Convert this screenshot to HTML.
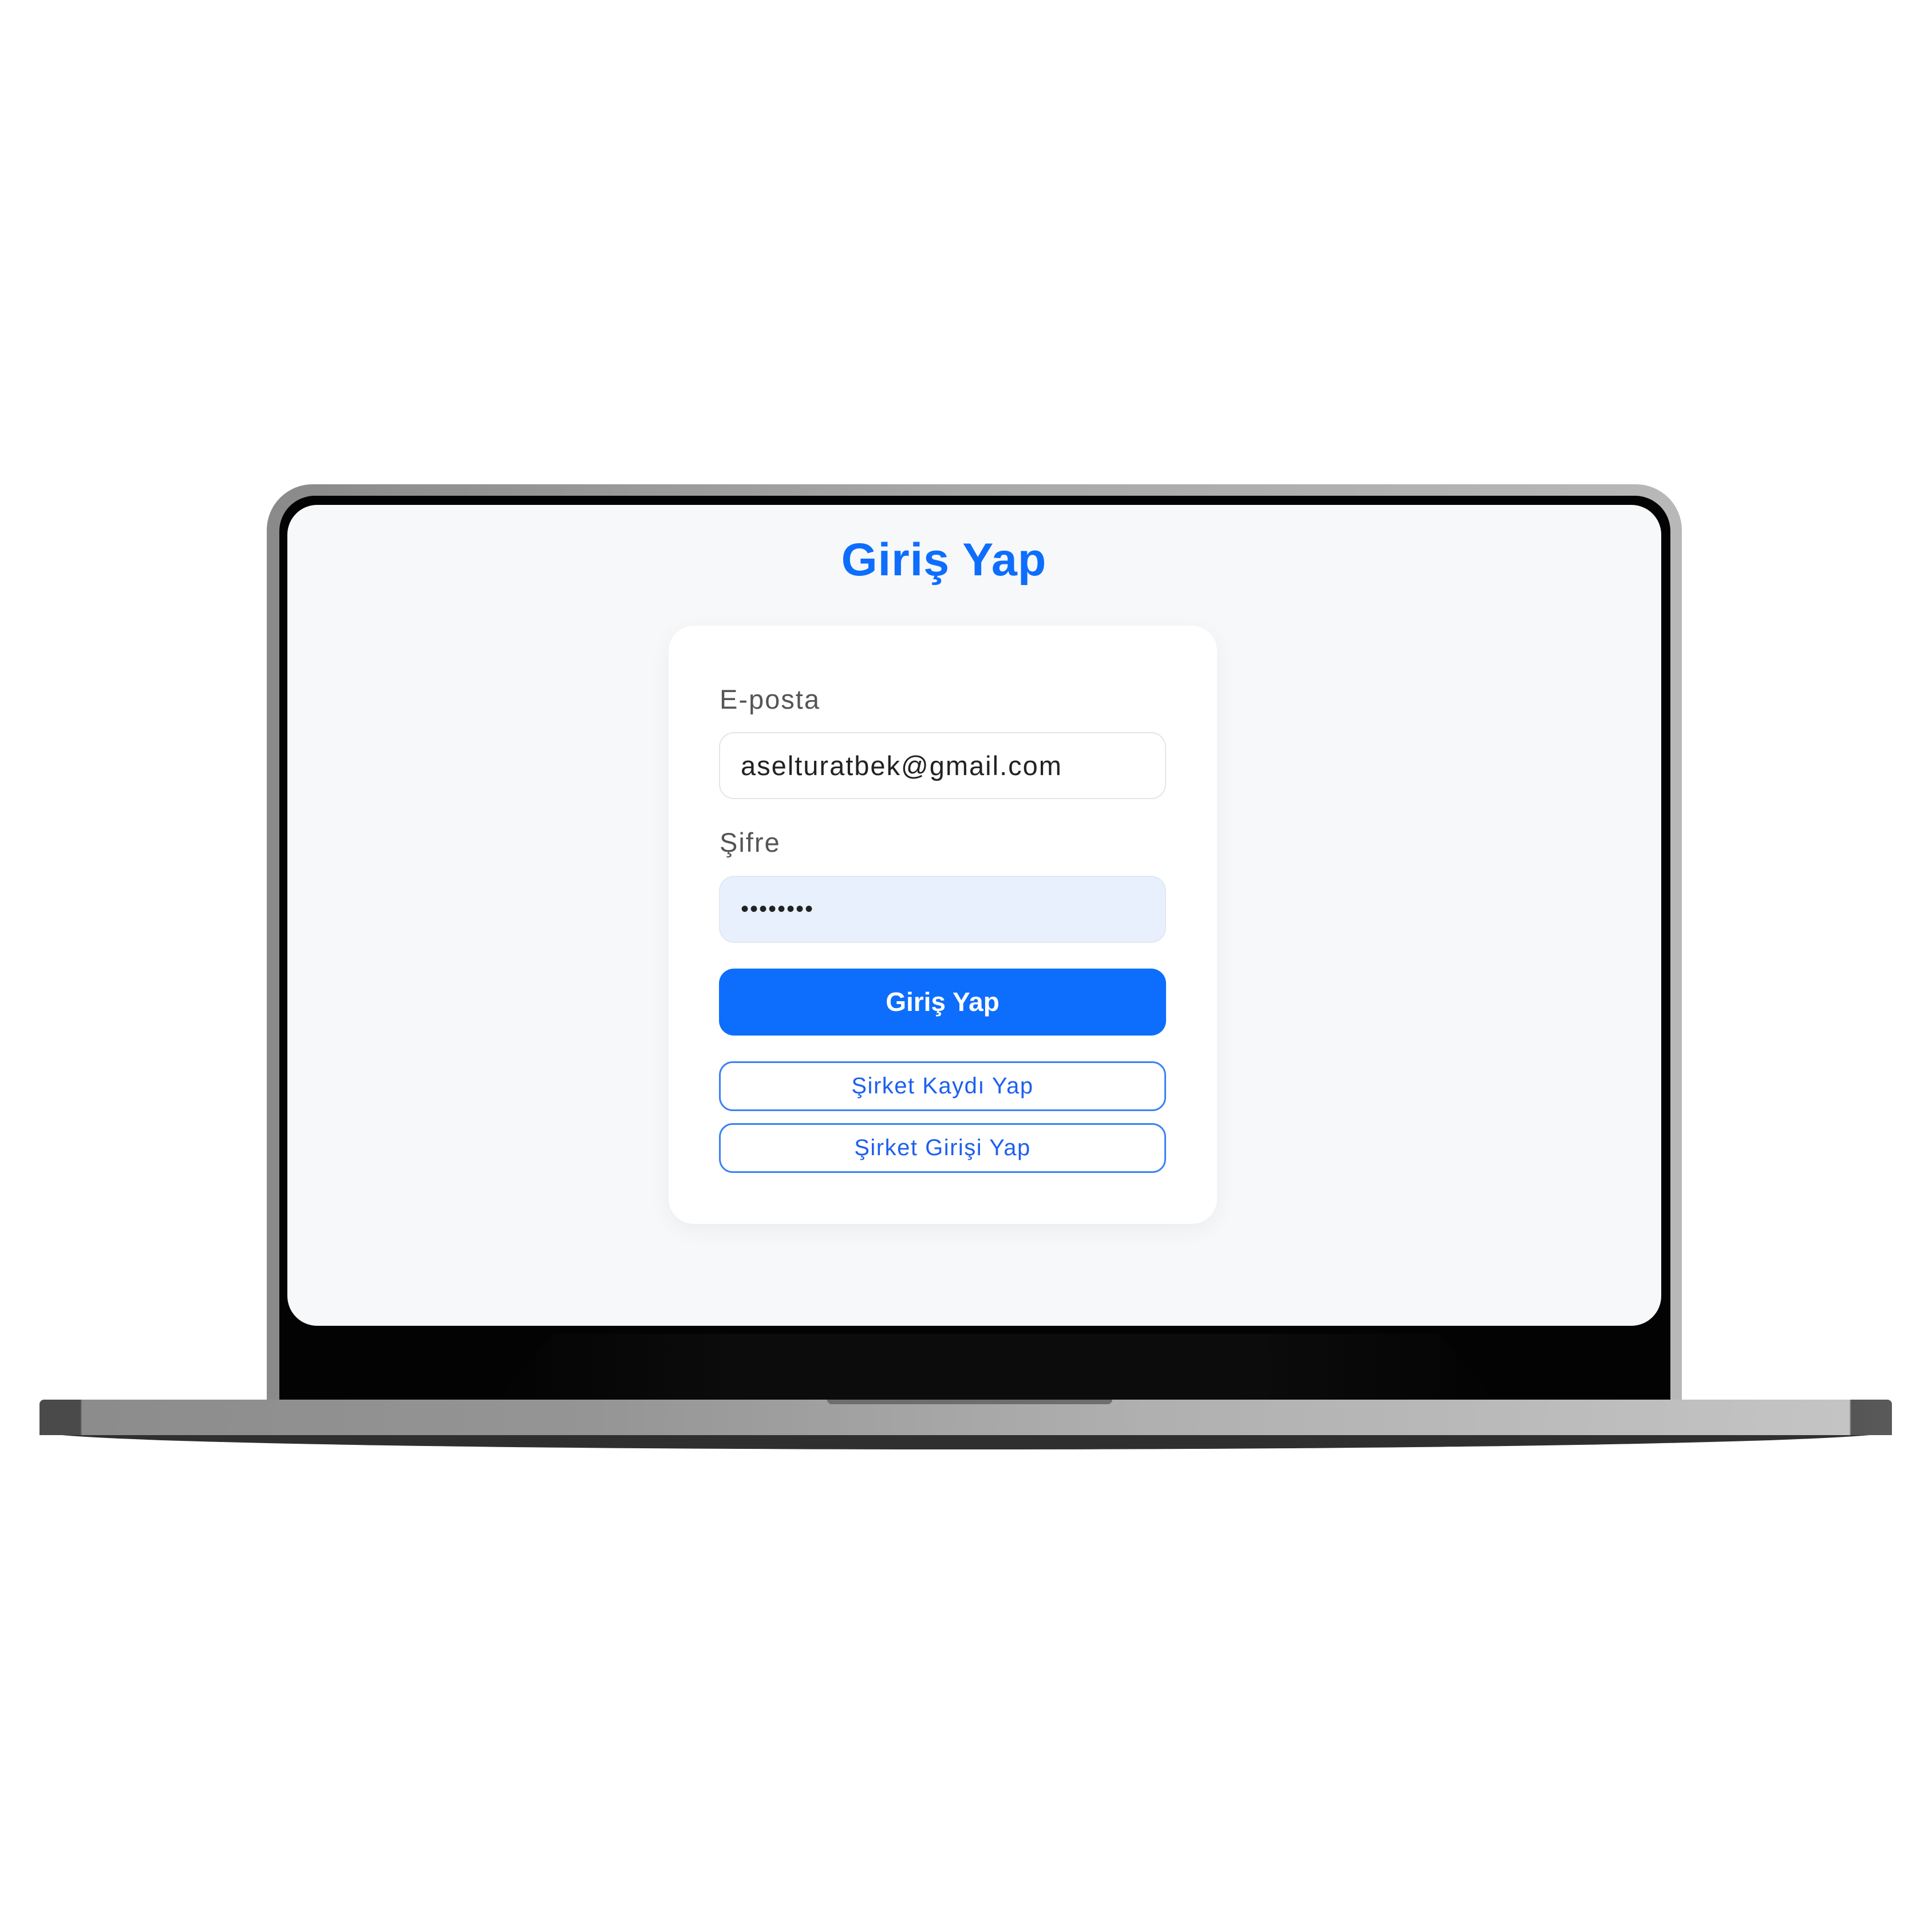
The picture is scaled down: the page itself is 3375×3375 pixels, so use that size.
<!DOCTYPE html>
<html><head><meta charset="utf-8"><style>
*{margin:0;padding:0;box-sizing:border-box}
html,body{width:3375px;height:3375px;background:#fff;overflow:hidden;font-family:"Liberation Sans",sans-serif}
.abs{position:absolute}
.bezel{left:466px;top:846px;width:2472px;height:1610px;border-radius:80px 80px 0 0;background:linear-gradient(90deg,#8a8a8a,#a8a8a8 50%,#b8b8b8)}
.black{left:488px;top:866px;width:2430px;height:1590px;border-radius:62px 62px 0 0;background:#030303}
.screen{left:502px;top:882px;width:2400px;height:1434px;border-radius:52px;background:#f7f8fa}
.kb{left:860px;top:2330px;width:1760px;height:126px;background:linear-gradient(90deg,rgba(20,20,20,0),rgba(16,16,16,.7) 25%,rgba(16,16,16,.7) 75%,rgba(20,20,20,0));clip-path:polygon(6% 0,94% 0,100% 100%,0 100%)}
.base{left:69px;top:2445px;width:3236px;height:62px;border-radius:8px 8px 0 0;background:linear-gradient(90deg,#4a4a4a 0,#4a4a4a 2.2%,#8c8c8c 2.3%,#959595 30%,#b0b0b0 60%,#c4c4c4 97.7%,#555 97.8%,#5a5a5a)}
.lip{left:69px;top:2500px;width:3236px;height:32px;background:#2f2f2f;border-radius:0 0 50% 50%/0 0 100% 100%}
.notch{left:1445px;top:2445px;width:498px;height:8px;background:#6e6e6e;border-radius:0 0 10px 10px}
h1{position:absolute;left:1149px;width:1000px;top:928px;text-align:center;color:#0d6efd;font-size:81px;font-weight:bold;line-height:100px;letter-spacing:1px}
.card{left:1168px;top:1093px;width:958px;height:1045px;background:#fff;border-radius:44px;box-shadow:0 10px 40px rgba(0,0,0,.05)}
.lbl{color:#555;font-size:47px;left:1257px;letter-spacing:2px}
.inp{left:1256px;width:781px;height:117px;border:2px solid #e2e5ea;border-radius:26px;background:#fff;padding-left:36px;font-size:47px;line-height:113px;color:#222;letter-spacing:2px}
.btn{left:1256px;width:781px;height:117px;border-radius:26px;background:#0d6efd;color:#fff;font-weight:bold;font-size:46px;text-align:center;line-height:117px}
.ob{left:1256px;width:781px;height:87px;border:3px solid #3b82f6;border-radius:24px;background:#fff;color:#1d5ff0;font-size:40px;text-align:center;line-height:81px;letter-spacing:1.5px}
</style></head><body>
<div class="abs bezel"></div>
<div class="abs black"></div>
<div class="abs screen"></div>
<div class="abs kb"></div>
<div class="abs lip"></div>
<div class="abs base"></div>
<div class="abs notch"></div>
<h1>Giriş Yap</h1>
<div class="abs card"></div>
<div class="abs lbl" style="top:1194px">E-posta</div>
<div class="abs inp" style="top:1279px">aselturatbek@gmail.com</div>
<div class="abs lbl" style="top:1444px">Şifre</div>
<div class="abs inp" style="top:1530px;background:#e8f0fe;border-color:#e2e8f2;font-size:40px;letter-spacing:2px">••••••••</div>
<div class="abs btn" style="top:1692px">Giriş Yap</div>
<div class="abs ob" style="top:1854px">Şirket Kaydı Yap</div>
<div class="abs ob" style="top:1962px">Şirket Girişi Yap</div>
</body></html>
